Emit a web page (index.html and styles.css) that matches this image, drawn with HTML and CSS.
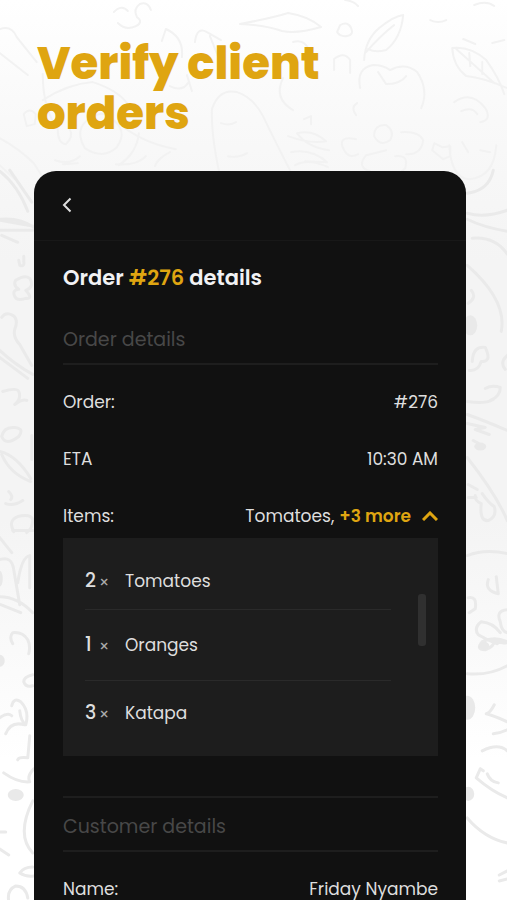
FILE: index.html
```html
<!DOCTYPE html>
<html lang="en">
<head>
<meta charset="utf-8">
<meta name="viewport" content="width=device-width, initial-scale=1">
<title>Verify client orders</title>
<link rel="stylesheet" href="styles.css">
</head>
<body>
<svg class="doodles" viewBox="0 0 507 900" preserveAspectRatio="xMidYMin slice" aria-hidden="true">
  <g class="faint">
    <path d="M114 12q8-8 14-1M118 23q8 8 18 3q8-4 1-9q-4-8 3-13q8-3 11 6"/>
    <path d="M240 24Q272 18 288 13Q308 16 321 27Q297 34 282 31Q264 25 240 24"/>
    <path d="M340 25q8-4 11 3t-4 8t-10-4zM345 0q9 1 13 6M430 20q8 4 16 0M474 5q12-5 20 1"/>
    <path d="M364 60Q365 40 379 28Q394 16 403 15Q401 38 386 50Q375 53 368 49M366 52Q380 36 394 25"/>
    <path d="M0 29q12-4 17 8l20 25M0 53l28 22M162 41l4-12q18 8 16 28M195 42q2-16 12-10l14 8M210 36l8 20"/>
    <path d="M452 48Q470 46 486 60Q499 78 504 94M452 48Q453 66 466 76Q484 78 507 88M456 49l38 34M469 53l1 13M482 62v12M463 39l12 5M492 43l12-3"/>
    <path d="M334 70v-11q10-8 16 1v13M283 78q-10 20 10 32M293 42q10-3 15 6M360 88q-4-20 13-23q10 0 17 5q15-8 27 2q12 18 4 36M378 72l8 12q14 0 20-8"/>
    <path d="M221 180Q211 137 212 109Q219 88 237 92Q253 97 263 116Q277 145 290 170L294 180M221 123q9 3 15-1M228 156q11 2 19-3"/>
    <path d="M43 74q0 35 15 55q0 14 8 15q8-7 4-15M43 100q25-16 50-18q25 8 35 22M55 160q16 5 25-4M63 164l15-1M116 164q20 2 30-8"/>
    <path d="M99 114q-28 10-14 34q18 12 32-1q12-17-6-29q-7-6-12-4zM118 122q22 20 58 27M139 133q-2 20-20 32M170 152q-12 6-15 14M187 75l5 16M170 86q12 6 18-3"/>
    <path d="M24 114q6-7 12 0l-1 10l-8 2zM0 138q20 11 34 25l9 14M0 165l15 14"/>
    <path d="M288 136q22 8 38 5q-13-12-29-8q10 14 32 17M291 152q20-4 36 10l-22-1M295 165q13-7 33 2M304 119l7-3v8"/>
    <path d="M356 139q-20-4-12 11q5 9 14 4M374 136q0-12 12-11q9 6 4 15q-10 7-16-4M401 132q18-1 22 8q-2 15-17 14M386 150l-20 5q-10 12 4 16M395 156q14-2 10 12l-10 9M356 115q-6-8 1-12"/>
    <path d="M432 150l2-7l8 4l8-1v10l-7 3zM454 102q17-12 31 6q7 12-5 14M461 111q11-5 16 3M449 145q2 33 20 34q25-2 27-34M462 142l6 10M480 150l10 2"/>
  </g>
  <g class="sketch">
    <path d="M0 171q18 14 28 40M10 170l22 32M0 220l34 6M0 230h33M2 235l16 7M0 219q20-2 34 8M19 260l1 5q5 2 4-4v-5"/>
    <path d="M16 280q9-6 14-2q5 9-4 12q8 9 0 8q-9 3-11-2q-3-6 4-7q-6-4-3-9M2 317q4-6 11-2q6 4 2 14q-2 8 5 15l12 21M0 350q15 14 33 24M0 357l28 21"/>
    <path d="M3 391q14-4 16 0q3 7-4 13q8-6 12-4M2 436q2-10 13-9q10 1 4 9q-13 10-17 0M0 451q17 4 31 27M2 454q8 19 29 27M32 435v24M9 491q5 5 2 8M6 503q8 3 17-3M14 531q-6-11 4-15q13-3 15 3q0 9-6 13"/>
    <path d="M0 537l12 15M13 530h20M0 559q12-4 14 10l6 35M18 582q4-26 12-27v32M0 596q18 0 33 16M1 604l20 8"/>
    <path d="M13 643q-4-7 0-11q10-1 15 7q3 6 1 14M33 674q-9 2-9 7q2 6 9 4M12 705q2-9 9-4q9 9 5 23q-5-4-6-14M0 717q8-6 12-2M25 724q-14-4-19 9M30 735l-2 22q-9-1-10 2M4 772q14 10 26 9q-3-6 4-13"/>
    <path d="M33 800q-17 34 0 52M0 831h6M0 848l9 6M33 866q-9 0-13 6q6 4 14 3M9 900q-2-11 7-15q10 0 12 12"/>
    <path d="M467 193q22-3 26-23M467 213q18 5 40-3M467 219q16 8 40 12M472 238q23-2 35 16M467 265q40 35 34 66"/>
    <path d="M468 303q9-6 3-13M472 361q1-16 13-14q7 15-4 14q-3 10-12 9M507 355q-8 7-2 14M485 388q7-4 15-1q0 9-10 13M467 401q17 3 26-2M467 414q17 6 40 16M467 423l18 4l-10 2l14 5M473 440l11 6M467 457q29 37 40 63M468 484l9 5M468 497h8M475 495q-1 5 6 8q-2 18 7 17q9-4 6-14q-6-4-12-13"/>
    <path d="M467 555q18-7 40-2M488 579q-4 11 10 14l-2-17M468 597q9-2 7 11l-6 4M507 609q-12 1-7 12q1 10 7 11M500 632q-7-10-19-11q-8 6-3 13q10 6 19 9M507 641q-13-6-25 0q-7 8 3 8q9-3 9-9q6 3 13 2M467 673q22 2 40-8M494 704q-4 8-8 9q8 2 21 8M493 733q8-1 14-4M482 750q16-8 25 0M480 768l-4 9q15 13 31 20M480 768l3 2M487 773q3 8 11 9M467 817q17 20 40 25M499 874l8-4M499 880l8-2"/>
  </g>
  <g class="blot">
    <ellipse cx="16" cy="794" rx="8" ry="6"/>
    <ellipse cx="0" cy="660" rx="5" ry="6"/>
    <ellipse cx="0" cy="578" rx="3" ry="8"/>
    <ellipse cx="470" cy="325" rx="7" ry="10"/>
    <ellipse cx="467" cy="707" rx="8" ry="12"/>
    <ellipse cx="468" cy="793" rx="6" ry="7"/>
    <ellipse cx="480" cy="446" rx="6" ry="4"/>
    <ellipse cx="484" cy="645" rx="5" ry="4"/>
  </g>
</svg>

<main class="page">
  <h1 class="headline">Verify client orders</h1>

  <section class="card">
    <header class="topbar">
      <button class="back" type="button" aria-label="Back">
        <svg width="10" height="16" viewBox="0 0 10 16" aria-hidden="true"><path d="M8.5 1.5 2 8l6.5 6.5"/></svg>
      </button>
    </header>

    <div class="content">
      <h2 class="title">Order <span class="accent">#276</span> details</h2>

      <h3 class="group">Order details</h3>
      <dl class="rows">
        <div class="row"><dt>Order:</dt><dd>#276</dd></div>
        <div class="row"><dt>ETA</dt><dd>10:30 AM</dd></div>
        <div class="row">
          <dt>Items:</dt>
          <dd class="summary">Tomatoes,
            <button class="more" type="button" aria-expanded="true" aria-controls="items">+3 more
              <svg width="16" height="10" viewBox="0 0 16 10" aria-hidden="true"><path d="M1 9 8 2l7 7"/></svg>
            </button>
          </dd>
        </div>
      </dl>

      <div class="panel" id="items">
        <ul class="items">
          <li class="item"><span class="qty">2</span><span class="times">×</span><span>Tomatoes</span></li>
          <li class="item"><span class="qty">1</span><span class="times">×</span><span>Oranges</span></li>
          <li class="item"><span class="qty">3</span><span class="times">×</span><span>Katapa</span></li>
        </ul>
        <span class="thumb"></span>
      </div>

      <h3 class="group group-ruled">Customer details</h3>
      <dl class="rows">
        <div class="row"><dt>Name:</dt><dd>Friday Nyambe</dd></div>
      </dl>
    </div>
  </section>
</main>
</body>
</html>
```

FILE: styles.css
```css
* {
  box-sizing: border-box;
}

body,
h1,
h2,
h3,
dl,
dd,
ul {
  margin: 0;
  padding: 0;
}

body {
  position: relative;
  min-height: 100vh;
  overflow-x: hidden;
  background: linear-gradient(#fff 0, #f9f9f9 120px, #f4f4f4 260px, #f4f4f4 520px, #fff 760px);
  color: #dedede;
  font-family: Poppins, Inter, "Liberation Sans", sans-serif;
  font-size: 17px;
  line-height: 24px;
}

button {
  padding: 0;
  border: 0;
  background: none;
  color: inherit;
  font: inherit;
  cursor: pointer;
}

.doodles {
  position: absolute;
  inset: 0;
  width: 100%;
  height: 100%;
  fill: none;
  stroke-linecap: round;
  stroke-linejoin: round;
}

.faint {
  stroke: #f2f2f2;
  stroke-width: 2;
}

.sketch {
  stroke: #eaeaea;
  stroke-width: 3;
}

.blot {
  fill: #e9e9e9;
}

.page {
  position: relative;
  display: flex;
  flex-direction: column;
  min-height: 100vh;
  padding: 39px 41px 0 34px;
}

.headline {
  max-width: 320px;
  margin-bottom: 32px;
  padding-left: 3px;
  color: #dfa511;
  font-size: 45px;
  font-weight: 800;
  line-height: 50px;
}

.card {
  flex: 1;
  border-radius: 22px 22px 0 0;
  background: #111;
}

.topbar {
  display: flex;
  align-items: center;
  height: 70px;
  padding: 0 28px 2px;
  border-bottom: 1px solid #181818;
}

.back {
  display: flex;
}

.back svg,
.more svg {
  fill: none;
  stroke: currentColor;
  stroke-width: 2;
}

.content {
  padding: 21px 28px 0 29px;
}

.title {
  margin-bottom: 34px;
  color: #f2f2f4;
  font-size: 21px;
  font-weight: 600;
  line-height: 32px;
}

.accent {
  color: #dfa511;
}

.group {
  padding-bottom: 11px;
  border-bottom: 2px solid #1e1e1e;
  color: #484848;
  font-size: 19px;
  font-weight: 400;
}

.group-ruled {
  margin-top: 40px;
  padding-top: 17px;
  border-top: 2px solid #1e1e1e;
}

.rows {
  display: grid;
  gap: 33px;
  padding-top: 25px;
}

.row {
  display: flex;
  justify-content: space-between;
}

.summary {
  display: flex;
  gap: 5px;
}

.more {
  display: flex;
  align-items: center;
  gap: 11px;
  color: #dfa511;
  font-weight: 600;
}

.more svg {
  stroke-width: 3;
}

.panel {
  display: flex;
  align-items: flex-start;
  justify-content: space-between;
  margin-top: 10px;
  padding: 8px 12px 8px 22px;
  background: #1d1d1d;
}

.items {
  flex: 1;
  margin-right: 27px;
  list-style: none;
}

.item {
  display: grid;
  grid-template-columns: 14px 26px 1fr;
  padding: 23px 0;
}

.item + .item {
  border-top: 1px solid #2a2a2a;
}

.item:first-child {
  padding-bottom: 16px;
}

.item:last-child {
  padding-top: 20px;
}

.qty {
  font-size: 19px;
  font-weight: 500;
}

.times {
  height: 24px;
  color: #aaa;
  font-size: 16px;
  line-height: 28px;
}

.thumb {
  width: 8px;
  height: 52px;
  margin-top: 48px;
  border-radius: 3px;
  background: #303030;
}
```
